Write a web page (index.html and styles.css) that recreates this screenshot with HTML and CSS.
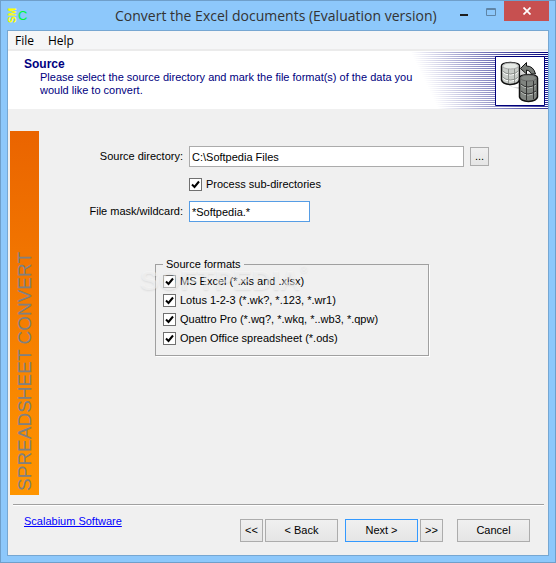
FILE: index.html
```html
<!DOCTYPE html>
<html lang="en">
<head>
    <meta charset="UTF-8">
    <meta name="viewport" content="width=device-width, initial-scale=1.0">
    <title>Convert the Excel documents (Evaluation version)</title>
    <link rel="stylesheet" href="styles.css">
</head>
<body>

    <div class="window">

        <!-- Title bar -->
        <header class="title-bar">
            <div class="app-icon"><span class="sm">SM</span><span class="c">C</span></div>
            <h1>Convert the Excel documents (Evaluation version)</h1>
            <div class="window-buttons">
                <button class="win-btn" aria-label="Minimize">
                    <svg width="8" height="12" viewBox="0 0 8 12"><path fill="#1e1e1e" d="M0 9h8v2H0z"/></svg>
                </button>
                <button class="win-btn" aria-label="Maximize" disabled>
                    <svg width="10" height="12" viewBox="0 0 10 12"><path fill="none" stroke="#5f85a6" d="M.5 3.500h9v7h-9zM0 4.500h10"/></svg>
                </button>
                <button class="win-btn close-btn" aria-label="Close">
                    <svg width="8" height="8" viewBox="0 0 8 8"><path fill="none" stroke="#fff" stroke-width="1.700" d="M.5.5l7 7M7.500.5l-7 7"/></svg>
                </button>
            </div>
        </header>

        <div class="client">
            <nav class="menu">
                <button>File</button>
                <button>Help</button>
            </nav>

            <!-- Step heading -->
            <section class="banner">
                <div class="banner-text">
                    <h2>Source</h2>
                    <p>Please select the source directory and mark the file format(s) of the data you would like to convert.</p>
                </div>
                <svg class="banner-icon" width="50" height="50" viewBox="0 0 50 50">
                    <path fill="#fff" stroke="#00007b" d="M.5.5h49v49H.5z"/>
                    <path fill="#777" d="M9 26l9 5h8V12l2-3 3 4-4 21-10-3z" opacity=".3"/>
                    <path fill="#c9cdc9" stroke="#111" stroke-width="1.500" d="M6.500 10q0-3 9-3.500q9 .5 9 3.500v14q-1 4-9 4.500q-8-.5-9-4.500z"/>
                    <ellipse cx="15.500" cy="10" rx="8" ry="3" fill="#e6eae6" stroke="#aaa"/>
                    <path fill="none" stroke="#fff" d="M7.500 16q3 3 8 3t8-3M7.500 22q3 3 8 3t8-3"/>
                    <path fill="none" stroke="#8d918d" d="M7.500 15q3 3 8 3t8-3M7.500 21q3 3 8 3t8-3M13.500 13v14M19.500 13v14"/>
                    <path fill="#808480" stroke="#111" stroke-width="1.500" d="M24.500 22q0-3 9-3.500q9 .5 9 3.500v19q-1 4-9 4.500q-8-.5-9-4.500z"/>
                    <ellipse cx="33.500" cy="22" rx="8" ry="3" fill="#858985" stroke="#666"/>
                    <path fill="none" stroke="#c3c7c3" d="M26 29q3 3 7 3t8-3M26 36q3 3 7 3t8-3"/>
                    <path fill="none" stroke="#333" d="M26 28q3 3 7 3t8-3M26 35q3 3 7 3t8-3M31.500 25v19M38.500 25v18"/>
                    <path fill="#777b77" stroke="#111" d="M25.500 12.500l6-6v3.500q7 0 9 8h-4q-2-4-5-4v4z"/>
                </svg>
            </section>

            <!-- Source page -->
            <main class="page">
                <aside class="side-banner"><span>SPREADSHEET CONVERT</span></aside>

                <form class="source-form">
                    <div class="form-row">
                        <label class="row-label" for="sourceDir">Source directory:</label>
                        <input type="text" id="sourceDir" class="dir-input" value="C:\Softpedia Files">
                        <button type="button" class="btn browse-btn">...</button>
                    </div>
                    <div class="form-row sub-row">
                        <label class="check"><input type="checkbox" checked>Process sub-directories</label>
                    </div>
                    <div class="form-row">
                        <label class="row-label" for="fileMask">File mask/wildcard:</label>
                        <input type="text" id="fileMask" class="mask-input" value="*Softpedia.*">
                    </div>

                    <fieldset class="formats">
                        <legend>Source formats</legend>
                        <label class="check"><input type="checkbox" checked>MS Excel (*.xls and .xlsx)</label>
                        <label class="check"><input type="checkbox" checked>Lotus 1-2-3 (*.wk?, *.123, *.wr1)</label>
                        <label class="check"><input type="checkbox" checked>Quattro Pro (*.wq?, *.wkq, *..wb3, *.qpw)</label>
                        <label class="check"><input type="checkbox" checked>Open Office spreadsheet (*.ods)</label>
                        <div class="watermark">SOFTPEDIA<sup>®</sup></div>
                    </fieldset>
                </form>
            </main>

            <!-- Wizard buttons -->
            <footer class="wizard-bar">
                <a href="#">Scalabium Software</a>
                <div class="wizard-buttons">
                    <button class="btn small">&lt;&lt;</button>
                    <button class="btn wide back">&lt; Back</button>
                    <button class="btn wide default">Next &gt;</button>
                    <button class="btn small last">&gt;&gt;</button>
                    <button class="btn wide">Cancel</button>
                </div>
            </footer>
        </div>
    </div>
</body>
</html>
```
FILE: styles.css
```css
* {
    box-sizing: border-box;
}

body {
    margin: 0;
    font-family: "Liberation Sans", Arial, sans-serif;
    font-size: 11px;
    line-height: 13px;
    color: #000;
}

h1, h2, p {
    margin: 0;
}

button, input {
    font: inherit;
    color: inherit;
}

.window {
    display: flex;
    flex-direction: column;
    min-height: 100vh;
    padding: 0 7px 7px;
    border: 1px solid #6f9fca;
    background-color: #8dc8fb;
}

/* Title bar */
.title-bar {
    display: flex;
    align-items: flex-start;
    height: 30px;
    margin-right: -1px;
}

.app-icon {
    display: flex;
    align-items: center;
    width: 19px;
    height: 16px;
    margin-top: 6px;
}

.app-icon .sm {
    writing-mode: vertical-rl;
    transform: rotate(180deg);
    font-size: 10px;
    line-height: 10px;
    font-weight: bold;
    color: #ffff00;
}

.app-icon .c {
    font-size: 13px;
    line-height: 13px;
    color: #00f53c;
}

.title-bar h1 {
    flex: 1;
    margin-top: 4px;
    padding-left: 88px;
    font-family: "Open Sans", sans-serif;
    font-size: 14px;
    line-height: 21px;
    font-weight: normal;
    color: #333;
    white-space: nowrap;
}

.window-buttons {
    display: flex;
}

.win-btn {
    display: flex;
    align-items: center;
    justify-content: center;
    width: 27px;
    height: 20px;
    padding: 0;
    border: none;
    background: none;
}

.close-btn {
    width: 45px;
    background-color: #c75050;
}

/* Client area */
.client {
    flex: 1;
    display: flex;
    flex-direction: column;
    outline: 1px solid #76a7d2;
    background-color: #f0f0f0;
}

.menu {
    display: flex;
    height: 20px;
    background-color: #f5f6f7;
    border-bottom: 2px solid #ebebeb;
}

.menu button {
    padding: 1px 7px 0;
    border: none;
    background: none;
    font-family: "Open Sans", sans-serif;
    font-size: 12px;
    line-height: 18px;
}

.banner {
    display: flex;
    justify-content: space-between;
    height: 59px;
    padding-right: 3px;
    border-bottom: 1px solid #f0f0f0;
    color: #000080;
    background:
        linear-gradient(64deg, #fff 17%, rgba(255, 255, 255, 0) 100%) right / 138px 100% no-repeat,
        repeating-linear-gradient(#fff 0 1px, #00007b 1px 2px) right / 138px 100% no-repeat,
        #fff;
}

.banner-text {
    padding: 6px 0 0 16px;
}

.banner-text h2 {
    font-size: 12px;
    line-height: 14px;
}

.banner-text p {
    max-width: 400px;
    padding-left: 16px;
}

.banner-icon {
    flex: none;
    margin-top: 5px;
}

/* Source page */
.page {
    flex: 1;
    display: flex;
    padding: 21px 8px 9px 2px;
}

.side-banner {
    display: flex;
    width: 29px;
    background: linear-gradient(#ea6400, #ff9500);
    font-size: 19px;
    line-height: 29px;
    color: #808080;
}

.side-banner span {
    align-self: flex-end;
    writing-mode: vertical-rl;
    transform: rotate(180deg);
    padding-top: 4px;
}

.source-form {
    flex: 1;
    padding: 15px 0 0 30px;
}

.form-row {
    display: flex;
    align-items: center;
    height: 21px;
}

.row-label {
    width: 120px;
    padding-right: 6px;
    text-align: right;
    white-space: nowrap;
}

.dir-input, .mask-input {
    height: 21px;
    padding: 0 2px;
    border: 1px solid #ababab;
    background-color: #fff;
}

.dir-input {
    width: 275px;
}

.mask-input {
    width: 121px;
    border-color: #569de5;
}

.sub-row {
    height: 34px;
    padding-left: 120px;
}

.check {
    display: flex;
    align-items: center;
    gap: 4px;
}

.check input {
    appearance: none;
    width: 13px;
    height: 13px;
    margin: 0;
    border: 1px solid #707070;
    background-color: #fff;
    background-image: url("data:image/svg+xml,%3Csvg xmlns='http://www.w3.org/2000/svg' viewBox='0 0 11 11'%3E%3Cpath d='M2 5.500L4.500 8L9 2.500' fill='none' stroke='%23000' stroke-width='2'/%3E%3C/svg%3E");
}

.btn {
    height: 23px;
    padding: 0;
    border: 1px solid #acacac;
    background: linear-gradient(#f0f0f0, #e5e5e5);
}

.browse-btn {
    width: 19px;
    height: 19px;
    margin-left: 6px;
}

.formats {
    position: relative;
    display: flex;
    flex-direction: column;
    gap: 6px;
    width: 274px;
    margin: 36px 0 0 86px;
    padding: 4px 7px 10px;
    border: 1px solid #a0a0a0;
    box-shadow: 1px 1px 0 #fff;
}

.formats legend {
    padding: 0 3px;
}

.watermark {
    position: absolute;
    left: -16px;
    top: -6px;
    font-size: 28px;
    line-height: 32px;
    font-weight: bold;
    color: rgba(250, 250, 250, 0.5);
    text-shadow: 0 1px 2px rgba(0, 0, 0, 0.08);
    pointer-events: none;
}

.watermark sup {
    font-size: 10px;
    line-height: 10px;
    vertical-align: top;
}

/* Wizard buttons */
.wizard-bar {
    display: flex;
    justify-content: space-between;
    margin: 0 4px 0 5px;
    padding: 14px 14px 13px 11px;
    border-top: 1px solid #a0a0a0;
    box-shadow: inset 0 1px 0 #fff;
}

.wizard-bar a {
    margin-top: -4px;
    color: #0000ff;
}

.wizard-buttons {
    display: flex;
}

.small {
    width: 23px;
}

.wide {
    width: 73px;
}

.back {
    margin: 0 7px 0 2px;
}

.default {
    margin-right: 2px;
    border-color: #3399ff;
}

.last {
    margin-right: 14px;
}
```
